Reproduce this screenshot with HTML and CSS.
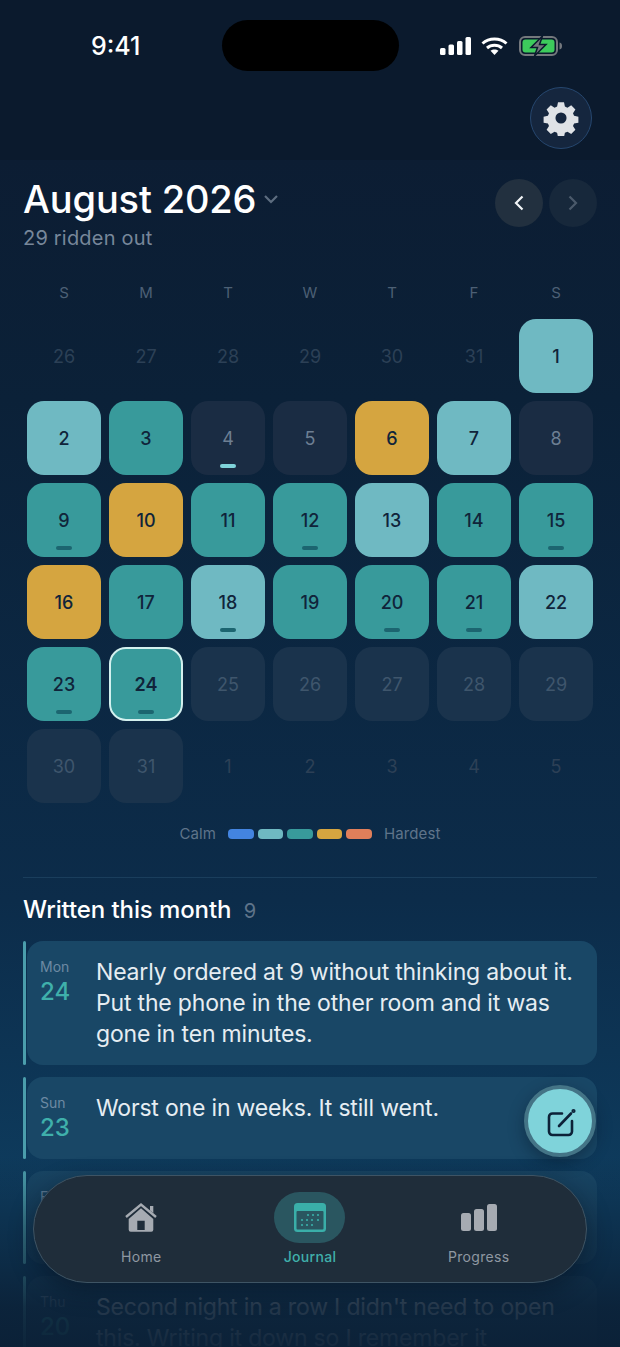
FILE: index.html
```html
<!DOCTYPE html>
<html lang="en">
<head>
    <meta charset="utf-8">
    <title>Journal</title>
    <link rel="stylesheet" href="styles.css">
</head>
<body>
<div class="screen">
    <div class="topbar">
        <div class="status">
            <span class="clock">9:41</span>
            <div class="island"></div>
            <div class="status-icons">
                <svg class="signal" width="31" height="18" viewBox="0 0 31 18" fill="#fff">
                    <rect x="0" y="11" width="5.500" height="7" rx="1.500"/>
                    <rect x="8.500" y="7.500" width="5.500" height="10.500" rx="1.500"/>
                    <rect x="17" y="4" width="5.500" height="14" rx="1.500"/>
                    <rect x="25.500" y="0" width="5.500" height="18" rx="1.500"/>
                </svg>
                <svg class="wifi" width="27" height="18" viewBox="0 0 27 18" fill="none" stroke="#fff" stroke-width="3">
                    <path d="M1.500 6.500C8 .6 19 .6 25.500 6.500"/>
                    <path d="M6 11c4.200-3.700 10.800-3.700 15 0"/>
                    <path d="M13.500 18 9.500 13.800c2.300-1.800 5.700-1.800 8 0z" fill="#fff" stroke="none"/>
                </svg>
                <svg width="44" height="20" viewBox="0 0 44 20">
                    <rect x="1" y="1" width="37" height="18" rx="5" fill="none" stroke="#74787d" stroke-width="2"/>
                    <rect x="3.500" y="3.500" width="32" height="13" rx="3" fill="#3dcb5c"/>
                    <path d="M40.500 6.500c2 .5 2.500 1.800 2.500 3.500s-.5 3-2.500 3.500z" fill="#74787d"/>
                    <path d="M23.500 0 12 11.500h6.500L15.500 20 27 8.500h-6.500z" fill="#74787d" stroke="#0b1a2d" stroke-width="1.500"/>
                </svg>
            </div>
        </div>
        <div class="settings-row">
            <button class="settings">
                <svg width="36" height="36" viewBox="0 0 24 24" fill="#dfe2e6">
                    <path fill-rule="evenodd" d="M10 1.500h4l.6 2.900 1.700.7 2.500-1.600 2.800 2.800-1.600 2.500.7 1.700 2.900.6v4l-2.900.6-.7 1.700 1.600 2.500-2.800 2.800-2.500-1.600-1.700.7-.6 2.900h-4l-.6-2.900-1.700-.7-2.500 1.600-2.800-2.800 1.600-2.500-.7-1.700-2.900-.6v-4l2.900-.6.7-1.700-1.600-2.500 2.800-2.800 2.500 1.600 1.700-.7zM12 8.300a3.700 3.700 0 1 0 0 7.400 3.700 3.700 0 0 0 0-7.400z"/>
                </svg>
            </button>
        </div>
    </div>

    <div class="month-head">
        <div>
            <h1>August 2026
                <svg class="caret" width="16" height="10" viewBox="0 0 16 10" fill="none" stroke="#5d6d80" stroke-width="2.200"><path d="M2 2l6 6 6-6"/></svg>
            </h1>
            <div class="sub">29 ridden out</div>
        </div>
        <div class="month-nav">
            <button class="nav-btn">
                <svg width="12" height="18" viewBox="0 0 12 18" fill="none" stroke="#f1f4f7" stroke-width="2.200"><path d="M9.500 2.500 3 9l6.500 6.500"/></svg>
            </button>
            <button class="nav-btn off">
                <svg width="12" height="18" viewBox="0 0 12 18" fill="none" stroke="#4b5a6b" stroke-width="2.200"><path d="M2.500 2.500 9 9l-6.500 6.500"/></svg>
            </button>
        </div>
    </div>

    <div class="weekdays">
        <span>S</span><span>M</span><span>T</span><span>W</span><span>T</span><span>F</span><span>S</span>
    </div>

    <div class="days">
        <div class="day out">26</div>
        <div class="day out">27</div>
        <div class="day out">28</div>
        <div class="day out">29</div>
        <div class="day out">30</div>
        <div class="day out">31</div>
        <div class="day light">1</div>

        <div class="day light">2</div>
        <div class="day teal">3</div>
        <div class="day empty note-light">4</div>
        <div class="day empty">5</div>
        <div class="day gold">6</div>
        <div class="day light">7</div>
        <div class="day empty">8</div>

        <div class="day teal note">9</div>
        <div class="day gold">10</div>
        <div class="day teal">11</div>
        <div class="day teal note">12</div>
        <div class="day light">13</div>
        <div class="day teal">14</div>
        <div class="day teal note">15</div>

        <div class="day gold">16</div>
        <div class="day teal">17</div>
        <div class="day light note">18</div>
        <div class="day teal">19</div>
        <div class="day teal note">20</div>
        <div class="day teal note">21</div>
        <div class="day light">22</div>

        <div class="day teal note">23</div>
        <div class="day teal note today">24</div>
        <div class="day future">25</div>
        <div class="day future">26</div>
        <div class="day future">27</div>
        <div class="day future">28</div>
        <div class="day future">29</div>

        <div class="day future">30</div>
        <div class="day future">31</div>
        <div class="day out">1</div>
        <div class="day out">2</div>
        <div class="day out">3</div>
        <div class="day out">4</div>
        <div class="day out">5</div>
    </div>

    <div class="legend">
        <span>Calm</span>
        <div class="swatches">
            <i class="sw-blue"></i><i class="sw-light"></i><i class="sw-teal"></i><i class="sw-gold"></i><i class="sw-coral"></i>
        </div>
        <span>Hardest</span>
    </div>

    <div class="divider"></div>

    <h2>Written this month <span class="count">9</span></h2>

    <div class="entries">
        <div class="entry">
            <div class="entry-card">
                <div class="date"><span class="dow">Mon</span><span class="num">24</span></div>
                <p>Nearly ordered at 9 without thinking about it. Put the phone in the other room and it was gone in ten minutes.</p>
            </div>
        </div>
        <div class="entry">
            <div class="entry-card">
                <div class="date"><span class="dow">Sun</span><span class="num">23</span></div>
                <p>Worst one in weeks. It still went.</p>
            </div>
        </div>
        <div class="entry">
            <div class="entry-card">
                <div class="date"><span class="dow">Fri</span><span class="num">21</span></div>
                <p>Had the craving right after dinner. Walked it off around the block.</p>
            </div>
        </div>
        <div class="entry">
            <div class="entry-card">
                <div class="date"><span class="dow">Thu</span><span class="num">20</span></div>
                <p>Second night in a row I didn't need to open this. Writing it down so I remember it</p>
            </div>
        </div>
    </div>

    <div class="fade"></div>

    <button class="fab">
        <svg width="32" height="32" viewBox="0 0 32 32" fill="none" stroke="#0d2238" stroke-width="2.600" stroke-linecap="round" stroke-linejoin="round">
            <path d="M18 8.500H8.500A3.500 3.500 0 0 0 5 12v14.500A3.500 3.500 0 0 0 8.500 30h16a3.500 3.500 0 0 0 3.500-3.500V16"/>
            <path d="M15 21 27 8.500"/>
            <circle cx="29.500" cy="6" r=".8" fill="#0d2238"/>
        </svg>
    </button>

    <nav class="tabbar">
        <div class="tab">
            <div class="tab-icon">
                <svg width="34" height="31" viewBox="0 0 34 31">
                    <path d="M2 15 17 2.500 32 15" fill="none" stroke="#a6abb2" stroke-width="2.400"/>
                    <path d="M26 4h3.300v7L26 8.500z" fill="#a6abb2"/>
                    <path fill-rule="evenodd" d="M4.700 17 17 6.300 29.300 17v10.700a2 2 0 0 1-2 2H6.700a2 2 0 0 1-2-2zM13.300 18.700V28h7.400v-9.300z" fill="#a6abb2"/>
                </svg>
            </div>
            <span>Home</span>
        </div>
        <div class="tab active">
            <div class="tab-icon">
                <svg width="32" height="29" viewBox="0 0 32 29">
                    <rect width="32" height="29" rx="3.500" fill="#3aafa9"/>
                    <rect x="2.500" y="8" width="27" height="18.500" rx="1" fill="#2a5660"/>
                    <g fill="#3aafa9">
                        <circle cx="14" cy="12" r="1.100"/><circle cx="19" cy="12" r="1.100"/><circle cx="24" cy="12" r="1.100"/>
                        <circle cx="8" cy="17" r="1.100"/><circle cx="13" cy="17" r="1.100"/><circle cx="18" cy="17" r="1.100"/><circle cx="24" cy="17" r="1.100"/>
                        <circle cx="8" cy="22" r="1.100"/><circle cx="13" cy="22" r="1.100"/><circle cx="18" cy="22" r="1.100"/>
                    </g>
                </svg>
            </div>
            <span>Journal</span>
        </div>
        <div class="tab">
            <div class="tab-icon">
                <svg width="36" height="27" viewBox="0 0 36 27" fill="#a6abb2">
                    <rect x="0" y="9" width="10" height="18" rx="2.500"/>
                    <rect x="13" y="5" width="10" height="22" rx="2.500"/>
                    <rect x="26" y="0" width="10" height="27" rx="2.500"/>
                </svg>
            </div>
            <span>Progress</span>
        </div>
    </nav>
</div>
</body>
</html>
```

FILE: styles.css
```css
* {
  box-sizing: border-box;
}

html, body {
  margin: 0;
  padding: 0;
}

body {
  background: #0b1a2d;
  font-family: Inter, "Liberation Sans", sans-serif;
}

button {
  border: 0;
  padding: 0;
  font: inherit;
}

.screen {
  position: relative;
  width: 620px;
  height: 1347px;
  overflow: hidden;
  background: linear-gradient(180deg, #0c1d33 160px, #0b2138 400px, #0c2c4a 900px, #0e3c5e 1200px);
}

/* Status bar and settings */
.topbar {
  height: 160px;
  background: #0b1a2d;
}

.status {
  position: relative;
  display: flex;
  justify-content: space-between;
  align-items: center;
  height: 72px;
  padding: 20px 57px 0 91px;
}

.clock {
  color: #fff;
  font-size: 25px;
  font-weight: 500;
}

.island {
  position: absolute;
  left: 222px;
  top: 20px;
  width: 177px;
  height: 51px;
  border-radius: 26px;
  background: #000;
}

.status-icons {
  display: flex;
  align-items: center;
  gap: 10px;
}

.wifi {
  margin-right: 1px;
}

.settings-row {
  display: flex;
  justify-content: flex-end;
  padding: 15px 28px 0 0;
}

.settings {
  display: flex;
  align-items: center;
  justify-content: center;
  width: 62px;
  height: 62px;
  border-radius: 50%;
  background: #15263e;
  border: 1px solid #26476f;
}

/* Month header */
.month-head {
  display: flex;
  justify-content: space-between;
  padding: 17px 23px 0;
}

h1 {
  margin: 0;
  color: #fff;
  font-size: 38px;
  font-weight: 550;
  line-height: 44px;
  letter-spacing: -0.15px;
}

.caret {
  margin-left: -3px;
  vertical-align: 9px;
}

.sub {
  margin-top: 4px;
  color: #77879a;
  font-size: 20px;
  line-height: 26px;
  letter-spacing: 0.2px;
}

.month-nav {
  display: flex;
  gap: 6px;
  padding-top: 2px;
}

.nav-btn {
  display: flex;
  align-items: center;
  justify-content: center;
  width: 48px;
  height: 48px;
  border-radius: 50%;
  background: #22303f;
}

.nav-btn.off {
  background: #17283b;
}

/* Calendar */
.weekdays {
  display: grid;
  grid-template-columns: repeat(7, 74px);
  column-gap: 8px;
  padding: 31px 27px 0;
  color: #4d6075;
  font-size: 15px;
  line-height: 22px;
  text-align: center;
}

.days {
  display: grid;
  grid-template-columns: repeat(7, 74px);
  grid-auto-rows: 74px;
  gap: 8px;
  padding: 15px 27px 0;
}

.day {
  position: relative;
  display: flex;
  align-items: center;
  justify-content: center;
  border-radius: 17px;
  color: #10243a;
  font-size: 18px;
  font-weight: 500;
}

.day.out {
  color: #2c4056;
  font-weight: 400;
}

.day.light {
  background: #6fb9c2;
}

.day.teal {
  background: #389a9b;
}

.day.gold {
  background: #d5a540;
}

.day.empty {
  background: #1a2c43;
  color: #6d7f93;
  font-weight: 400;
}

.day.future {
  background: #1a334c;
  color: #3f566c;
  font-weight: 400;
}

.day.today {
  border: 2px solid #d3f0ee;
  font-weight: 600;
}

.note:after,
.note-light:after {
  content: "";
  position: absolute;
  left: 50%;
  bottom: 7px;
  width: 16px;
  height: 4px;
  margin-left: -8px;
  border-radius: 2px;
  background: #1c6570;
}

.note-light:after {
  background: #7fd3da;
}

.today:after {
  bottom: 5px;
}

.legend {
  display: flex;
  justify-content: center;
  align-items: center;
  gap: 12px;
  margin-top: 21px;
  color: #5f748a;
  font-size: 15px;
  line-height: 20px;
  letter-spacing: 0.1px;
}

.swatches {
  display: flex;
  gap: 4px;
}

.swatches i {
  display: block;
  width: 25.6px;
  height: 10px;
  border-radius: 4px;
}

.sw-blue { background: #4384e0; }
.sw-light { background: #6fb9c2; }
.sw-teal { background: #389a9b; }
.sw-gold { background: #d5a540; }
.sw-coral { background: #e07f5a; }

.divider {
  height: 1px;
  margin: 33px 23px 0;
  background: #1a3e5c;
}

h2 {
  margin: 17px 23px 0;
  color: #fff;
  font-size: 24px;
  font-weight: 500;
  line-height: 30px;
  letter-spacing: -0.1px;
}

.count {
  margin-left: 6px;
  color: #5f748a;
  font-size: 20px;
  font-weight: 400;
}

/* Journal entries */
.entries {
  display: flex;
  flex-direction: column;
  gap: 12px;
  margin: 15px 23px 0;
}

.entry {
  display: flex;
}

.entry:before {
  content: "";
  flex: none;
  width: 3px;
  margin-right: 1px;
  border-radius: 2px;
  background: #4b9eac;
}

.entry-card {
  display: flex;
  flex: 1;
  gap: 25px;
  min-height: 82px;
  padding: 16px 20px 15px 13px;
  border-radius: 16px;
  background: #194766;
}

.date {
  display: flex;
  flex-direction: column;
  flex: none;
  width: 31px;
}

.dow {
  color: #6d8aa3;
  font-size: 14px;
  line-height: 20px;
}

.num {
  color: #3fb0ab;
  font-size: 24px;
  font-weight: 500;
  line-height: 30px;
}

.entry-card p {
  margin: 0;
  color: #e6edf2;
  font-size: 23px;
  line-height: 31px;
  letter-spacing: -0.18px;
}

/* Bottom fade, button and tab bar */
.fade {
  position: absolute;
  left: 0;
  right: 0;
  bottom: 0;
  height: 190px;
  background: linear-gradient(180deg, rgba(11, 32, 54, 0), rgba(11, 32, 54, 0.6) 56%, rgba(11, 32, 54, 0.88) 79%, rgba(11, 32, 54, 0.96) 100%);
}

.fab {
  position: absolute;
  left: 524px;
  top: 1085px;
  display: flex;
  align-items: center;
  justify-content: center;
  width: 72px;
  height: 72px;
  border-radius: 50%;
  background: #7fd3da;
  border: 4px solid #447486;
  box-shadow: 0 6px 16px rgba(5, 20, 35, 0.4);
}

.tabbar {
  position: absolute;
  left: 33px;
  top: 1175px;
  display: grid;
  grid-template-columns: repeat(3, 1fr);
  width: 554px;
  height: 108px;
  padding: 16px 23px 0;
  border-radius: 54px;
  background: #1f2d3a;
  border: 1px solid #3e5464;
  box-shadow: 0 8px 24px rgba(4, 14, 26, 0.45);
}

.tab {
  display: flex;
  flex-direction: column;
  align-items: center;
  color: #8f98a2;
  font-size: 14px;
  line-height: 20px;
  letter-spacing: 0.3px;
}

.tab-icon {
  display: flex;
  align-items: center;
  justify-content: center;
  width: 71px;
  height: 51px;
  margin-bottom: 4px;
  border-radius: 26px;
}

.tab.active {
  color: #3fb0ab;
  font-weight: 500;
}

.tab.active .tab-icon {
  background: #2a5660;
}
```
